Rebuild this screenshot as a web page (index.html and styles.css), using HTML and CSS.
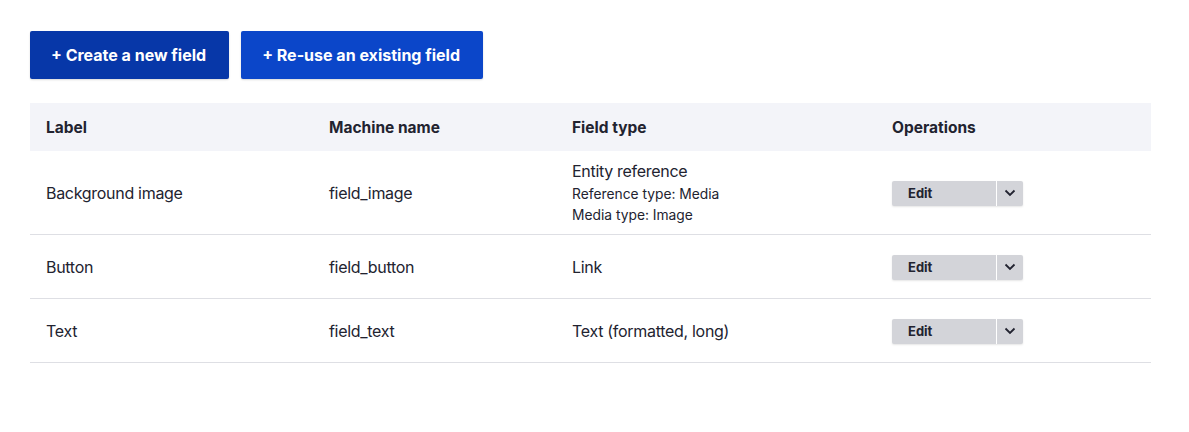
FILE: index.html
```html
<!DOCTYPE html>
<html lang="en">
<head>
<meta charset="utf-8">
<title>Manage fields</title>
<link rel="stylesheet" href="styles.css">
</head>
<body>
<main class="page">
  <div class="actions">
    <a class="btn btn-primary btn-hover" href="#">+ Create a new field</a>
    <a class="btn btn-primary" href="#">+ Re-use an existing field</a>
  </div>
  <table class="fields">
    <colgroup>
      <col class="c-label"><col class="c-machine"><col class="c-type"><col class="c-ops">
    </colgroup>
    <thead>
      <tr><th>Label</th><th>Machine name</th><th>Field type</th><th>Operations</th></tr>
    </thead>
    <tbody>
      <tr>
        <td>Background image</td>
        <td>field_image</td>
        <td class="multi">
          <div>Entity reference</div>
          <div class="small small-first">Reference type: Media</div>
          <div class="small">Media type: Image</div>
        </td>
        <td><div class="dropbutton"><span class="db-main">Edit</span><span class="db-toggle"><svg width="12" height="8" viewBox="0 0 12 8"><path d="M1.5 1.5 L6 6 L10.5 1.5" fill="none" stroke="#222330" stroke-width="1.8"/></svg></span></div></td>
      </tr>
      <tr>
        <td>Button</td>
        <td>field_button</td>
        <td>Link</td>
        <td><div class="dropbutton"><span class="db-main">Edit</span><span class="db-toggle"><svg width="12" height="8" viewBox="0 0 12 8"><path d="M1.5 1.5 L6 6 L10.5 1.5" fill="none" stroke="#222330" stroke-width="1.8"/></svg></span></div></td>
      </tr>
      <tr>
        <td>Text</td>
        <td>field_text</td>
        <td>Text (formatted, long)</td>
        <td><div class="dropbutton"><span class="db-main">Edit</span><span class="db-toggle"><svg width="12" height="8" viewBox="0 0 12 8"><path d="M1.5 1.5 L6 6 L10.5 1.5" fill="none" stroke="#222330" stroke-width="1.8"/></svg></span></div></td>
      </tr>
    </tbody>
  </table>
</main>
</body>
</html>
```
FILE: styles.css
```css
html, body {
  margin: 0;
  padding: 0;
  background: #fff;
}
body {
  font-family: Inter, "Noto Sans", "Liberation Sans", sans-serif;
  color: #222330;
  font-size: 16px;
}
.page {
  padding: 31px 38px 0 30px;
}
.actions {
  display: flex;
  gap: 12px;
  margin-bottom: 24px;
}
.btn {
  display: inline-block;
  padding: 16px 23px 16px 21px;
  line-height: 16px;
  font-size: 16px;
  font-weight: 700;
  color: #fff;
  text-decoration: none;
  border-radius: 2px;
  box-shadow: 0 1px 2px rgba(0, 0, 0, 0.15);
}
.btn-primary {
  background: #0b46c9;
}
.btn-hover {
  background: #0737a8;
}
.fields {
  width: 1121px;
  border-collapse: collapse;
  table-layout: fixed;
}
.c-label { width: 283px; }
.c-machine { width: 243px; }
.c-type { width: 320px; }
.c-ops { width: 275px; }
.fields th {
  background: #f3f4f9;
  height: 48px;
  padding: 0 16px;
  text-align: left;
  font-weight: 700;
  font-size: 15.5px;
}
.fields td {
  height: 64px;
  padding: 8px 16px;
  border-bottom: 1px solid #dedfe4;
  line-height: 24px;
  letter-spacing: -0.3px;
  box-sizing: border-box;
}
.fields td.multi {
  padding-top: 8px;
  padding-bottom: 8px;
}
.small {
  font-size: 13.8px;
  line-height: 21px;
  letter-spacing: 0;
}
.small-first {
  margin-top: 1px;
}
.dropbutton {
  display: inline-flex;
  height: 25px;
  border-radius: 2px;
  background: #d3d4d9;
  box-shadow: 0 1px 2px rgba(0, 0, 0, 0.1);
  overflow: hidden;
  letter-spacing: 0;
}
.db-main {
  width: 105px;
  padding-left: 16px;
  box-sizing: border-box;
  font-size: 13px;
  font-weight: 700;
  line-height: 25px;
  border-right: 1px solid #fff;
}
.db-toggle {
  width: 26px;
  display: flex;
  align-items: center;
  justify-content: center;
}
```
